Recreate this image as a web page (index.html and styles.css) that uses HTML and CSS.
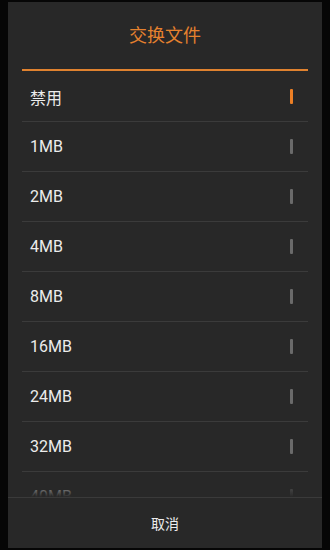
FILE: index.html
```html
<!DOCTYPE html>
<html>
<head>
<meta charset="utf-8">
<link rel="stylesheet" href="styles.css">
</head>
<body>
<div class="dialog">
  <div class="header">交换文件</div>
  <div class="rule"></div>
  <div class="list">
    <div class="row"><span class="label">禁用</span><span class="mark on"></span></div>
    <div class="row"><span class="label">1MB</span><span class="mark"></span></div>
    <div class="row"><span class="label">2MB</span><span class="mark"></span></div>
    <div class="row"><span class="label">4MB</span><span class="mark"></span></div>
    <div class="row"><span class="label">8MB</span><span class="mark"></span></div>
    <div class="row"><span class="label">16MB</span><span class="mark"></span></div>
    <div class="row"><span class="label">24MB</span><span class="mark"></span></div>
    <div class="row"><span class="label">32MB</span><span class="mark"></span></div>
    <div class="row"><span class="label">40MB</span><span class="mark"></span></div>
    <div class="fade"></div>
  </div>
  <div class="footer">取消</div>
</div>
</body>
</html>
```
FILE: styles.css
```css
html, body {
  margin: 0;
  padding: 0;
  background: #060606;
  width: 330px;
  height: 550px;
  overflow: hidden;
}
body {
  padding-top: 2px;
  box-sizing: border-box;
  font-family: Roboto, "Noto Sans CJK SC", sans-serif;
}
.dialog {
  margin: 0 8px;
  height: 546px;
  background: #282828;
  display: flex;
  flex-direction: column;
}
.header {
  height: 64px;
  padding-bottom: 3px;
  display: flex;
  align-items: center;
  justify-content: center;
  color: #e5812e;
  font-size: 18px;
  font-family: "Noto Sans CJK SC", sans-serif;
}
.rule {
  height: 2px;
  margin: 0 14px;
  background: #e0822f;
}
.list {
  flex: 1;
  overflow: hidden;
  position: relative;
  margin: 1px 14px 0;
}
.row {
  height: 49px;
  border-bottom: 1px solid #3b3b3b;
  display: flex;
  align-items: center;
  justify-content: space-between;
  padding: 0 15px 0 8px;
}
.label {
  color: #ececec;
  font-size: 16px;
}
.mark {
  width: 3px;
  height: 15px;
  background: #6a6a6a;
  border-radius: 1px;
}
.mark.on {
  background: #ec7f25;
}
.fade {
  position: absolute;
  left: 0;
  right: 0;
  bottom: 0;
  height: 12px;
  background: linear-gradient(to bottom, rgba(40,40,40,0.4), #282828);
}
.footer {
  height: 50px;
  border-top: 1px solid #3a3a3a;
  display: flex;
  align-items: center;
  justify-content: center;
  color: #ececec;
  font-size: 14px;
  font-family: "Noto Sans CJK SC", sans-serif;
}
```
